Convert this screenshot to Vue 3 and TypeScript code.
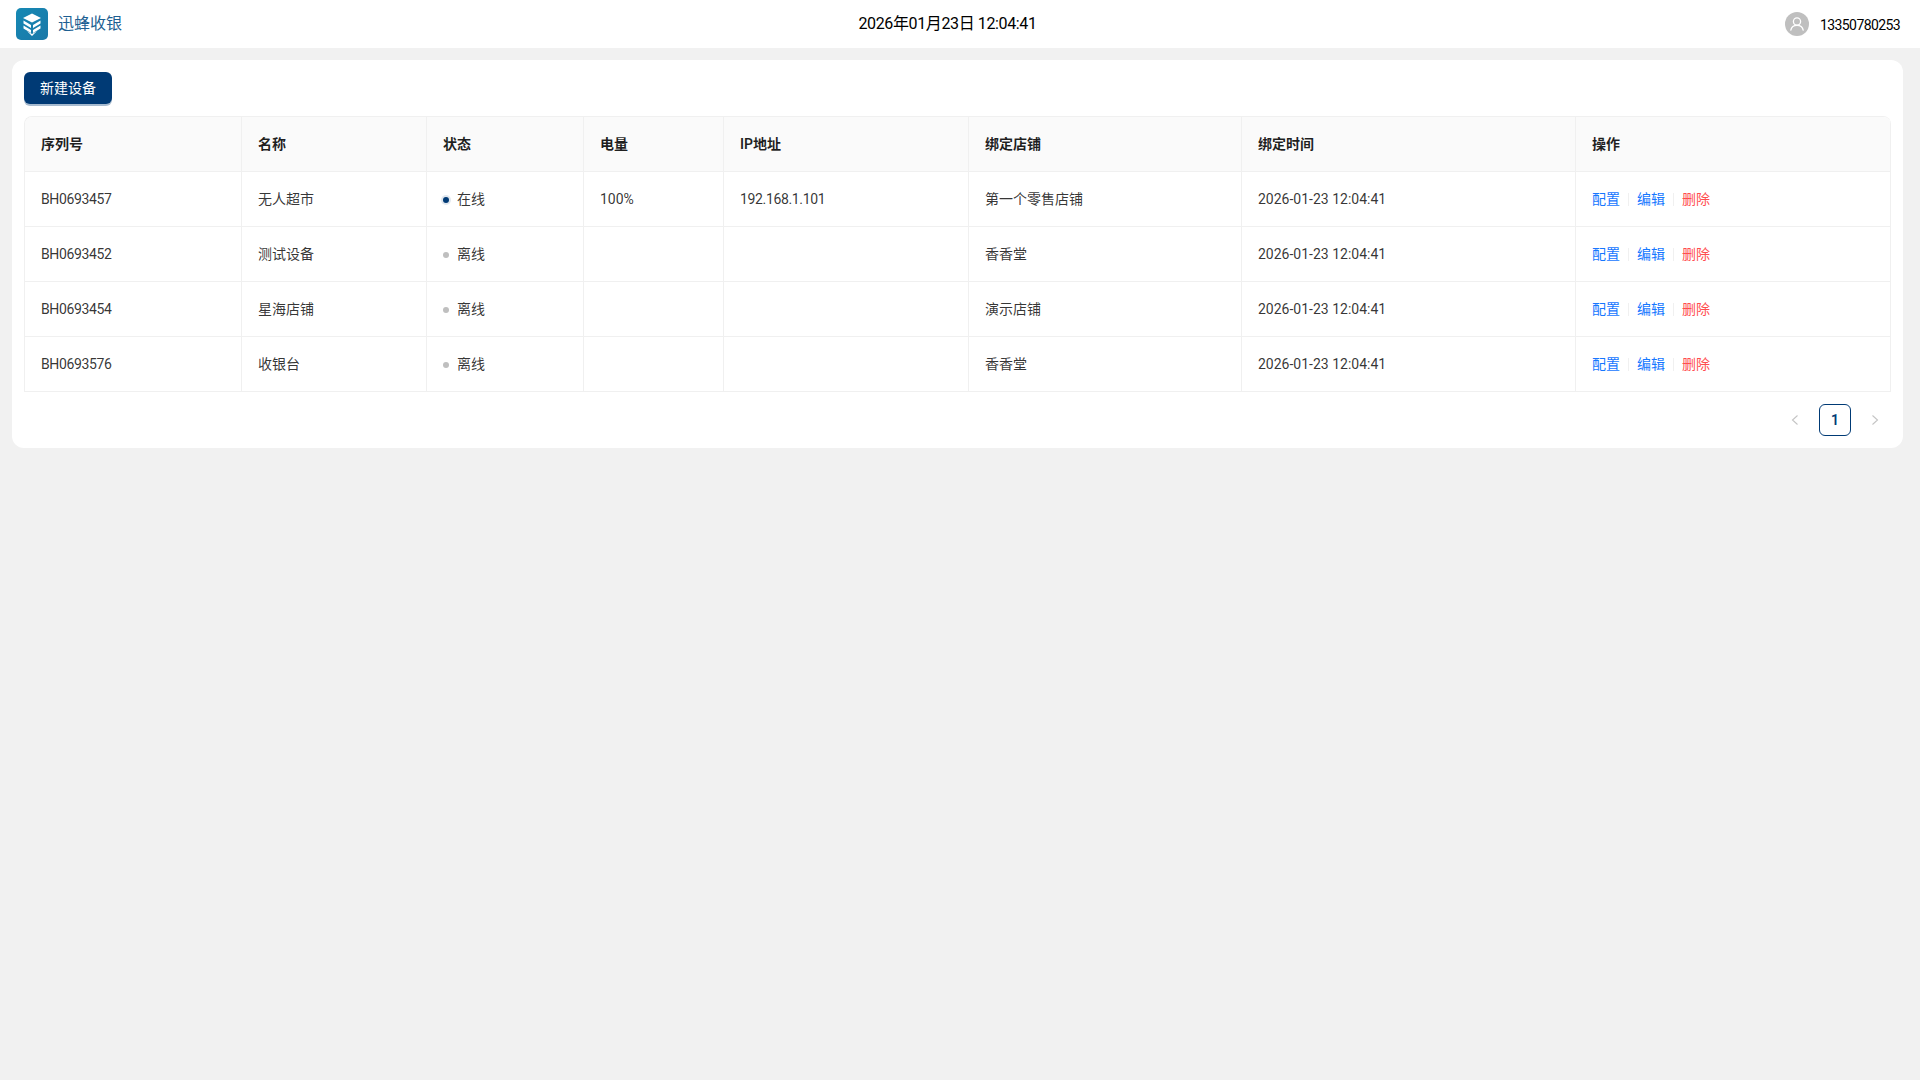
<script setup lang="ts">
interface Device {
  sn: string
  name: string
  online: boolean
  battery: string
  ip: string
  store: string
  boundAt: string
}

const columns = ['序列号', '名称', '状态', '电量', 'IP地址', '绑定店铺', '绑定时间', '操作']
const colWidths = [217, 185, 157, 140, 245, 273, 334, 315]

const devices: Device[] = [
  { sn: 'BH0693457', name: '无人超市', online: true, battery: '100%', ip: '192.168.1.101', store: '第一个零售店铺', boundAt: '2026-01-23 12:04:41' },
  { sn: 'BH0693452', name: '测试设备', online: false, battery: '', ip: '', store: '香香堂', boundAt: '2026-01-23 12:04:41' },
  { sn: 'BH0693454', name: '星海店铺', online: false, battery: '', ip: '', store: '演示店铺', boundAt: '2026-01-23 12:04:41' },
  { sn: 'BH0693576', name: '收银台', online: false, battery: '', ip: '', store: '香香堂', boundAt: '2026-01-23 12:04:41' },
]
</script>

<template>
  <div class="page">
    <header class="topbar">
      <div class="brand">
        <svg class="logo" viewBox="0 0 32 32" width="32" height="32">
          <defs>
            <linearGradient id="logoBg" x1="0" y1="0" x2="1" y2="1">
              <stop offset="0" stop-color="#1689b4" />
              <stop offset="1" stop-color="#1a78a8" />
            </linearGradient>
          </defs>
          <rect width="32" height="32" rx="5" fill="url(#logoBg)" />
          <path d="M16 5.500 25 10 16 14.500 7 10Z" fill="#fff" />
          <path d="M7.500 12.600 15 17v3L7.500 15.600ZM24.500 12.600 17 17v3l7.500-4.400Z" fill="#fff" />
          <path d="M7.500 17.600 15 22v3l-7.500-4.400ZM24.500 17.600 17 22v3l7.500-4.400Z" fill="#fff" />
          <path d="M11 23 16 26 21 23 16 28Z" fill="#fff" />
        </svg>
        <span class="brand-name">迅蜂收银</span>
      </div>
      <div class="clock">2026年01月23日 12:04:41</div>
      <div class="user">
        <span class="avatar">
          <svg viewBox="0 0 24 24" width="24" height="24" fill="none" stroke="#fff" stroke-width="1.300">
            <circle cx="12" cy="9.500" r="3.600" />
            <path d="M5.800 18.200c.6-3.200 3-4.800 6.200-4.800s5.600 1.600 6.200 4.800" stroke-linecap="round" />
          </svg>
        </span>
        <span class="phone">13350780253</span>
      </div>
    </header>

    <main class="content">
      <section class="card">
        <button class="btn-primary" type="button">新建设备</button>

        <div class="table-wrap">
          <table class="device-table">
            <colgroup>
              <col v-for="(w, i) in colWidths" :key="i" :style="{ width: w + 'px' }" />
            </colgroup>
            <thead>
              <tr>
                <th v-for="col in columns" :key="col">{{ col }}</th>
              </tr>
            </thead>
            <tbody>
              <tr v-for="d in devices" :key="d.sn">
                <td class="cell-tight">{{ d.sn }}</td>
                <td>{{ d.name }}</td>
                <td>
                  <div class="status">
                    <i class="dot" :class="{ 'dot--on': d.online }"></i>
                    <span>{{ d.online ? '在线' : '离线' }}</span>
                  </div>
                </td>
                <td>{{ d.battery }}</td>
                <td class="cell-tight">{{ d.ip }}</td>
                <td>{{ d.store }}</td>
                <td>{{ d.boundAt }}</td>
                <td>
                  <div class="actions">
                    <a class="link">配置</a>
                    <i class="sep"></i>
                    <a class="link">编辑</a>
                    <i class="sep"></i>
                    <a class="link link--danger">删除</a>
                  </div>
                </td>
              </tr>
            </tbody>
          </table>
        </div>

        <nav class="pager">
          <span class="pager-arrow">
            <svg viewBox="0 0 12 12" width="12" height="12" fill="none" stroke="#c4c4c4" stroke-width="1.100">
              <path d="M8.500 1.500 3.500 6l5 4.500" />
            </svg>
          </span>
          <span class="pager-item">1</span>
          <span class="pager-arrow">
            <svg viewBox="0 0 12 12" width="12" height="12" fill="none" stroke="#c4c4c4" stroke-width="1.100">
              <path d="M3.500 1.500 8.500 6l-5 4.500" />
            </svg>
          </span>
        </nav>
      </section>
    </main>
  </div>
</template>

<style>
html,
body {
  margin: 0;
  background: #f1f1f1;
}
</style>

<style scoped>
.page {
  min-height: 1080px;
  background: #f1f1f1;
  font-family: Roboto, "Noto Sans CJK SC", sans-serif;
  font-size: 14px;
  color: rgba(0, 0, 0, 0.88);
}
.topbar {
  height: 48px;
  background: #fff;
  display: grid;
  grid-template-columns: 1fr auto 1fr;
  align-items: center;
  padding: 0 20px 0 16px;
}
.brand {
  display: flex;
  align-items: center;
  gap: 10px;
}
.logo {
  display: block;
}
.brand-name {
  font-size: 16px;
  line-height: 22px;
  padding-bottom: 1px;
  color: #1d5f92;
}
.clock {
  font-size: 16px;
  line-height: 22px;
  padding-bottom: 1px;
  margin-right: 21px;
  color: #000;
  letter-spacing: -0.37px;
}
.user {
  justify-self: end;
  display: flex;
  align-items: center;
  gap: 11px;
}
.avatar {
  width: 24px;
  height: 24px;
  border-radius: 50%;
  background: #bfbfbf;
  display: block;
}
.avatar svg {
  display: block;
}
.phone {
  font-size: 14px;
  letter-spacing: -0.6px;
  padding-top: 1px;
  color: #000;
}
.content {
  padding: 12px 17px 12px 12px;
}
.card {
  background: #fff;
  border-radius: 12px;
  padding: 12px;
}
.btn-primary {
  display: block;
  height: 32px;
  padding: 0 16px 2px;
  border: 0;
  border-radius: 6px;
  background: #003a75;
  color: #fff;
  font: inherit;
  box-shadow: 0 2px 0 rgba(0, 58, 117, 0.35);
}
.table-wrap {
  margin-top: 12px;
  border-top: 1px solid #f0f0f0;
  border-left: 1px solid #f0f0f0;
  border-radius: 8px 8px 0 0;
  overflow: hidden;
}
.device-table {
  width: 100%;
  table-layout: fixed;
  border-collapse: separate;
  border-spacing: 0;
}
.device-table th,
.device-table td {
  padding: 16px;
  line-height: 22px;
  height: 22px;
  text-align: left;
  border-right: 1px solid #f0f0f0;
  border-bottom: 1px solid #f0f0f0;
  box-sizing: content-box;
}
.device-table th {
  background: #fafafa;
  font-weight: 600;
}
.device-table td {
  color: rgba(0, 0, 0, 0.8);
}
.device-table td.cell-tight {
  letter-spacing: -0.35px;
}
.status {
  display: flex;
  align-items: center;
  gap: 8px;
  height: 22px;
}
.dot {
  width: 6px;
  height: 6px;
  margin-top: 1px;
  border-radius: 50%;
  background: #bfbfbf;
}
.dot--on {
  background: #003a75;
  box-shadow: 0 0 0 2px rgba(0, 58, 117, 0.12);
}
.actions {
  display: flex;
  align-items: center;
  height: 22px;
}
.link {
  color: #1677ff;
}
.link--danger {
  color: #ff4d4f;
}
.sep {
  width: 1px;
  height: 13px;
  margin: 0 8px;
  background: #f0f0f0;
}
.pager {
  margin-top: 12px;
  display: flex;
  justify-content: flex-end;
  gap: 8px;
}
.pager-arrow,
.pager-item {
  width: 32px;
  height: 32px;
  box-sizing: border-box;
  display: flex;
  align-items: center;
  justify-content: center;
}
.pager-item {
  border: 1px solid #003a75;
  border-radius: 6px;
  font-weight: 600;
  color: #003a75;
}
</style>
